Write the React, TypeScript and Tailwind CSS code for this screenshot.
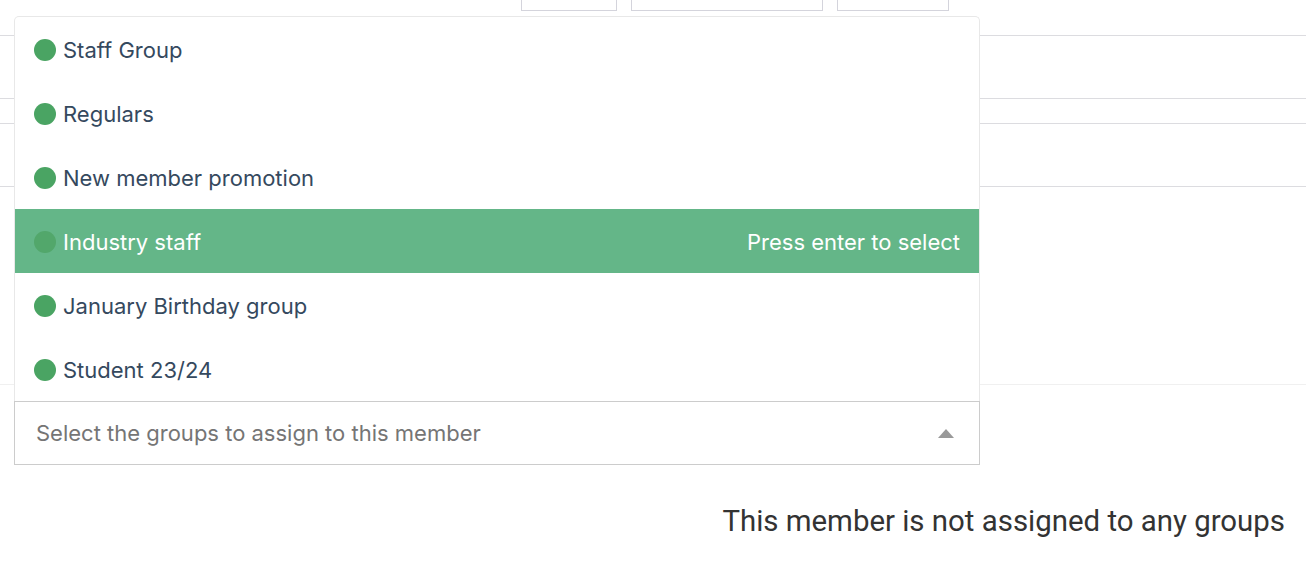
import React from "react";

const groups = [
  "Staff Group",
  "Regulars",
  "New member promotion",
  "Industry staff",
  "January Birthday group",
  "Student 23/24",
];

export default function App() {
  const font = { fontFamily: "Inter, 'Noto Sans', sans-serif" };
  return (
    <div className="relative w-[1306px] h-[572px] overflow-hidden bg-white" style={font}>
      {/* top buttons row */}
      <div className="flex h-[11px]">
        <div className="ml-[521px] w-[96px] h-[11px] border-x border-b border-[#d4d4dc]" />
        <div className="ml-[14px] w-[192px] h-[11px] border-x border-b border-[#d4d4dc]" />
        <div className="ml-[14px] w-[112px] h-[11px] border-x border-b border-[#d4d4dc]" />
      </div>
      {/* table lines behind */}
      <div className="mt-[24px] flex flex-col">
        <div className="h-[63px] border-t border-[#dcdce0]" />
        <div className="h-[25px] border-t border-[#dcdce0]" />
        <div className="h-[63px] border-t border-[#dcdce0]" />
        <div className="border-t border-[#dcdce0]" />
      </div>
      <div className="mt-[197px] border-t border-[#f0f0f0]" />

      {/* select */}
      <div className="relative mt-[16px] ml-[14px] w-[966px]">
        <div className="absolute bottom-full left-0 w-full bg-white border-x border-t border-[#e8e8e8] rounded-t-[5px]">
          {groups.map((g, i) => {
            const hi = i === 3;
            return (
              <div
                key={g}
                className={`h-[64px] flex items-center pl-[19px] pr-[19px] pt-[1px] text-[22px] ${
                  hi ? "bg-[#64b688] text-white" : "text-[#35495e]"
                }`}
              >
                <span
                  className={`w-[22px] h-[22px] rounded-full mr-[7px] shrink-0 ${
                    hi ? "bg-[#52a76b]" : "bg-[#4aa463]"
                  }`}
                />
                <span className="flex-1 pt-[2px]">{g}</span>
                {hi && <span className="pt-[2px]">Press enter to select</span>}
              </div>
            );
          })}
        </div>
        <div className="h-[64px] border border-[#cccccc] flex items-center pl-[21px] pr-[24px] text-[22px] text-[#757575]">
          <span className="flex-1">Select the groups to assign to this member</span>
          <svg width="16" height="9" viewBox="0 0 16 9" className="mr-[1px]">
            <path d="M8 0 L16 9 L0 9 Z" fill="#999999" />
          </svg>
        </div>
      </div>

      <div
        className="mt-[38px] pr-[21px] text-right text-[29.4px] leading-[36px] text-[#333333]"
        style={{ fontFamily: "Roboto, Inter, sans-serif" }}
      >
        This member is not assigned to any groups
      </div>
    </div>
  );
}
